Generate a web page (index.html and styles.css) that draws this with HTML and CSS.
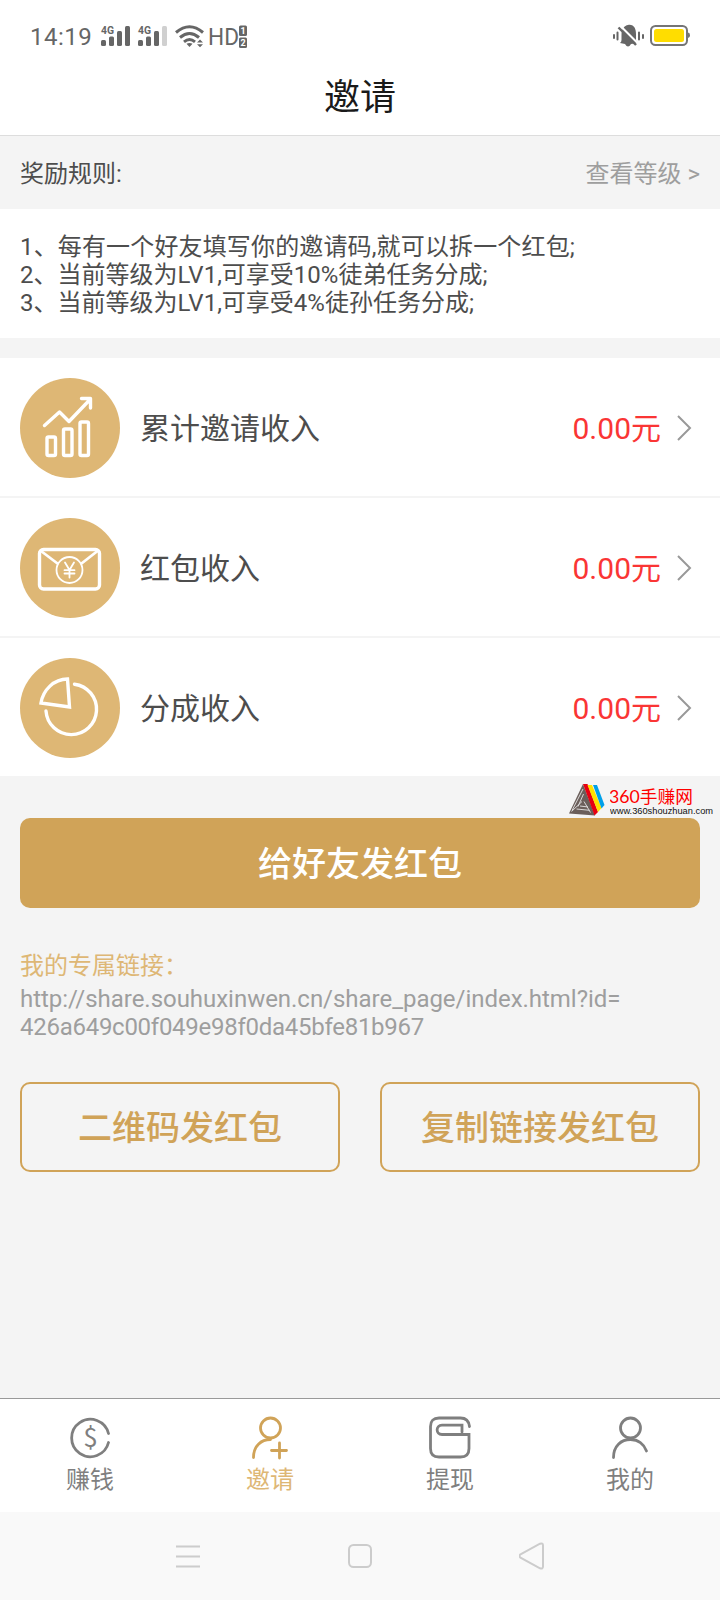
FILE: index.html
```html
<!DOCTYPE html>
<html lang="zh-CN">
<head>
    <meta charset="UTF-8">
    <meta name="viewport" content="width=device-width, initial-scale=1.0">
    <title>邀请</title>
    <link rel="stylesheet" href="styles.css">
</head>
<body>
    <!-- Status bar -->
    <div class="status-bar">
        <span class="time">14:19</span>
        <svg class="signals" width="160" height="28" viewBox="96 22 160 28">
            <g fill="#666">
                <text class="net" x="101" y="34" textLength="13" lengthAdjust="spacingAndGlyphs">4G</text>
                <rect x="101" y="40" width="5" height="6" rx="1.500"/>
                <rect x="109" y="36.500" width="5" height="9.500" rx="1.500"/>
                <rect x="117" y="31" width="5" height="15" rx="1.500"/>
                <rect x="125" y="26" width="5" height="20" rx="1.500"/>
                <text class="net" x="138" y="34" textLength="13" lengthAdjust="spacingAndGlyphs">4G</text>
                <rect x="138" y="40" width="5" height="6" rx="1.500"/>
                <rect x="146" y="36.500" width="5" height="9.500" rx="1.500"/>
                <rect x="154" y="31" width="5" height="15" rx="1.500"/>
                <rect x="162" y="26" width="5" height="20" rx="1.500" fill="#d0d0d0"/>
                <path d="M186.500 43.800q3-1.800 6 0l-3 3.200z"/>
                <path d="M197 42.500l3-3 3 3zM197 44.300h6l-3 3z"/>
                <text class="hd" x="208" y="45" textLength="31" lengthAdjust="spacingAndGlyphs">HD</text>
                <rect x="239" y="25.500" width="8" height="10.500" rx="1.500"/>
                <rect x="239" y="37.500" width="8" height="10.500" rx="1.500"/>
            </g>
            <g fill="none" stroke="#666" stroke-width="3">
                <path d="M176 32.500q13.500-11.500 27 0"/>
                <path d="M180 37.500q9.500-8 19 0"/>
                <path d="M184 41.800q5.500-4.500 11 0"/>
            </g>
            <text class="sim" x="243" y="34">1</text>
            <text class="sim" x="243" y="46">2</text>
        </svg>
        <svg class="battery" width="80" height="28" viewBox="612 22 80 28">
            <path d="M614 35v3M617.500 32.500v7M639 32.500v7M643 35v3" stroke="#666" stroke-width="2" stroke-linecap="round"/>
            <path d="M620 43q1.500-1 1.500-3v-5c0-6 3-9.500 6.500-10 6-1 8 4 8 9v6q0 2 1.500 3l-6.500 1q-3 5-6 0z" fill="#666"/>
            <path d="M620 25.500l19 19" stroke="#fff" stroke-width="2.200"/>
            <path d="M618.500 27.500l17.500 17.500" stroke="#666" stroke-width="2.400"/>
            <rect x="651" y="26" width="36" height="19" rx="4.500" fill="#fff" stroke="#757575" stroke-width="2"/>
            <path d="M688 32.500q2 0 2 2.700t-2 2.700z" fill="#757575"/>
            <rect x="654" y="29" width="30" height="13" rx="2.500" fill="#fd0"/>
        </svg>
    </div>

    <div class="header">邀请</div>

    <!-- Reward rules -->
    <div class="rules-title">
        <span>奖励规则:</span>
        <a href="#">查看等级 &gt;</a>
    </div>
    <div class="rules">
        <p class="wide">1、每有一个好友填写你的邀请码,就可以拆一个红包;</p>
        <p>2、当前等级为LV1,可享受10%徒弟任务分成;</p>
        <p>3、当前等级为LV1,可享受4%徒孙任务分成;</p>
    </div>

    <!-- Income list -->
    <div class="income">
        <div class="income-row">
            <svg class="income-icon" width="100" height="100" viewBox="0 0 100 100">
                <circle cx="50" cy="50" r="50"/>
                <g class="line">
                    <path d="M24.500 47.500L39.500 34 49 43.500 70 21.500M61.500 20.500h9V30"/>
                    <rect x="27" y="59" width="8.500" height="18.500" rx="1.500"/>
                    <rect x="43.500" y="51" width="8.500" height="26.500" rx="1.500"/>
                    <rect x="60" y="44" width="8.500" height="33.500" rx="1.500"/>
                </g>
            </svg>
            <span class="income-name">累计邀请收入</span>
            <span class="income-money">0.00元</span>
            <svg class="arrow" width="16" height="28" viewBox="0 0 16 28"><path d="M2 2l12 12L2 26"/></svg>
        </div>
        <div class="income-row">
            <svg class="income-icon" width="100" height="100" viewBox="0 0 100 100">
                <circle cx="50" cy="50" r="50"/>
                <g class="line">
                    <rect x="19.500" y="31.500" width="60" height="39.500" rx="4"/>
                    <path class="mid" d="M21 33l16.500 12.500M77.500 33L61.500 45.500"/>
                    <circle class="thin" cx="49.500" cy="52" r="13"/>
                    <path class="thin" d="M45 44.500l4.500 7.500 4.500-7.500M49.500 52v7.500M44.500 52.200h10M44.500 55.500h10"/>
                </g>
            </svg>
            <span class="income-name">红包收入</span>
            <span class="income-money">0.00元</span>
            <svg class="arrow" width="16" height="28" viewBox="0 0 16 28"><path d="M2 2l12 12L2 26"/></svg>
        </div>
        <div class="income-row">
            <svg class="income-icon" width="100" height="100" viewBox="0 0 100 100">
                <circle cx="50" cy="50" r="50"/>
                <g class="line">
                    <path class="sharp" d="M47.500 21C34 21 23 32 21 45l28.500 4z"/>
                    <path d="M54.500 26.200A25.300 25.300 0 1 1 26 53"/>
                </g>
            </svg>
            <span class="income-name">分成收入</span>
            <span class="income-money">0.00元</span>
            <svg class="arrow" width="16" height="28" viewBox="0 0 16 28"><path d="M2 2l12 12L2 26"/></svg>
        </div>
    </div>

    <!-- Site mark -->
    <div class="site-mark">
        <svg width="36" height="32" viewBox="0 0 36 32">
            <path d="M14 0L0 29.500 26 31.500z" fill="#6b5f5b"/>
            <path d="M14 5L3 26.500M14.500 10L9 22.500M2.500 27.500L13 17.500M15 17.500l6.500 11M7.500 25l13 1.300M11 22l8 1" stroke="#e4e4e4" stroke-width=".9" fill="none"/>
            <path d="M14 0h4.500l10.500 28-3.500 3.500z" fill="#e60012"/>
            <path d="M18.500 1h4.500l9.500 23-3.500 4z" fill="#ffe100"/>
            <path d="M24 1h4l7.500 20-3 3.500z" fill="#00a0e9"/>
        </svg>
        <div class="site-text">
            <svg width="104" height="32" viewBox="0 0 104 32">
                <text class="site-name" x="-1" y="19" textLength="84" lengthAdjust="spacingAndGlyphs">360手赚网</text>
                <text class="site-url" x="0" y="29.500" textLength="103" lengthAdjust="spacingAndGlyphs">www.360shouzhuan.com</text>
            </svg>
        </div>
    </div>

    <!-- Share actions -->
    <div class="share">
        <button class="btn btn-main">给好友发红包</button>
        <div class="link-title">我的专属链接：</div>
        <div class="link-url">http://share.souhuxinwen.cn/share_page/index.html?id=<br><span class="link-id">426a649c00f049e98f0da45bfe81b967</span></div>
        <div class="btn-group">
            <button class="btn btn-line">二维码发红包</button>
            <button class="btn btn-line">复制链接发红包</button>
        </div>
    </div>

    <!-- Tab bar -->
    <div class="tab-bar">
        <a href="#" class="tab">
            <svg width="44" height="44" viewBox="0 0 44 44">
                <path d="M40.500 17.500A18.700 18.700 0 1 0 40.500 26.500"/>
                <text class="dollar" x="22.500" y="31">$</text>
            </svg>
            <span>赚钱</span>
        </a>
        <a href="#" class="tab active">
            <svg width="44" height="44" viewBox="0 0 44 44">
                <circle cx="22.500" cy="12" r="10"/>
                <path d="M5.500 41.500C5.500 30 13 23.500 22.500 23.500M23.500 34.500h15M31.500 27v15"/>
            </svg>
            <span>邀请</span>
        </a>
        <a href="#" class="tab">
            <svg width="44" height="44" viewBox="0 0 44 44">
                <path d="M41.500 10.500Q40.500 2 32.500 2H11Q2.500 2 2.500 10.500V32.500Q2.500 41 11 41H32.500Q41 41 41 32.500V18.500H14C7.500 18.500 7.500 9.200 14 9.200H34V16"/>
            </svg>
            <span>提现</span>
        </a>
        <a href="#" class="tab">
            <svg width="44" height="44" viewBox="0 0 44 44">
                <circle cx="22.500" cy="12" r="10"/>
                <path d="M5.500 41.500C5.500 30 13 23.500 22.500 23.500C30 23.500 36 28 38.500 35"/>
            </svg>
            <span>我的</span>
        </a>
    </div>

    <!-- System navigation -->
    <div class="nav-bar">
        <svg width="26" height="28" viewBox="0 0 26 28"><path d="M1 4.500h24M1 14.500h24M1 24.500h24"/></svg>
        <svg width="26" height="28" viewBox="0 0 26 28"><rect x="2" y="3" width="22" height="22" rx="4.500"/></svg>
        <svg width="26" height="28" viewBox="0 0 26 28"><path d="M1 12.300L20.500 1.700Q23.500.8 23.500 3.500V24.500Q23.500 27.200 20.500 26.300L1 15.700Q-1 14 1 12.300z" transform="translate(.5 0)"/></svg>
    </div>
</body>
</html>
```
FILE: styles.css
```css
* {
    box-sizing: border-box;
}
body {
    font-family: Roboto, "Noto Sans CJK SC", sans-serif;
    margin: 0;
    min-height: 1600px;
    display: flex;
    flex-direction: column;
    background-color: #f4f4f4;
    color: #4d4d4d;
    font-size: 24px;
}
a {
    color: #9e9e9e;
    text-decoration: none;
}
p {
    margin: 0;
}
svg {
    display: block;
    flex: none;
}
.status-bar {
    height: 72px;
    padding: 0 28px 0 30px;
    display: flex;
    align-items: center;
    background-color: #fff;
    color: #666;
}
.time {
    width: 66px;
    line-height: 28px;
    padding-top: 2px;
    letter-spacing: 0.5px;
}
.battery {
    margin-left: auto;
}
.net {
    font-size: 10px;
    font-weight: bold;
}
.hd {
    font-size: 24px;
}
.sim {
    font-size: 9px;
    font-weight: bold;
    fill: #fff;
    text-anchor: middle;
}
.header {
    height: 64px;
    line-height: 52px;
    border-bottom: 1px solid #ddd;
    background-color: #fff;
    color: #1a1a1a;
    font-size: 36px;
    text-align: center;
}
.rules-title {
    height: 73px;
    padding: 0 20px 2px;
    display: flex;
    justify-content: space-between;
    align-items: center;
}
.rules {
    height: 129px;
    padding: 24px 20px 0;
    background-color: #fff;
    line-height: 28px;
}
.rules .wide {
    letter-spacing: 0.15px;
}
.income {
    margin-top: 20px;
    background-color: #fff;
}
.income-row {
    height: 140px;
    padding: 2px 28px 0 20px;
    display: flex;
    align-items: center;
    border-bottom: 2px solid #f4f4f4;
    font-size: 30px;
}
.income-row:last-child {
    height: 138px;
    border-bottom: none;
}
.income-icon {
    margin-right: 20px;
    fill: #deb775;
}
.income-name,
.income-money {
    padding-bottom: 4px;
}
.line {
    fill: none;
    stroke: #fff;
    stroke-width: 3.4;
    stroke-linecap: round;
    stroke-linejoin: round;
}
.line .mid {
    stroke-width: 2.8;
}
.line .thin {
    stroke-width: 1.8;
}
.line .sharp {
    stroke-linejoin: miter;
}
.income-money {
    margin-left: auto;
    color: #fa3534;
}
.arrow {
    margin-left: 15px;
    fill: none;
    stroke: #999;
    stroke-width: 2;
}
.site-mark {
    height: 42px;
    padding: 8px 6px 0 0;
    display: flex;
    justify-content: flex-end;
}
.site-text {
    margin-left: 5px;
    width: 104px;
}
.site-name {
    fill: #f00;
    font-size: 17px;
    font-family: Lato, "Noto Sans CJK SC", sans-serif;
}
.site-url {
    fill: #111;
    font-size: 9px;
    font-family: "Liberation Sans", sans-serif;
}
.share {
    padding: 0 20px;
}
.btn {
    display: block;
    width: 100%;
    height: 90px;
    padding: 0 0 4px;
    border: none;
    border-radius: 10px;
    font-family: inherit;
    font-size: 34px;
    font-weight: 500;
    cursor: pointer;
}
.btn-main {
    background-color: #d0a358;
    color: #fff;
}
.btn-line {
    border: 2px solid #d0a358;
    background-color: transparent;
    color: #d0a358;
}
.link-title {
    margin-top: 40px;
    line-height: 36px;
    color: #deb775;
}
.link-url {
    margin-top: 1px;
    line-height: 28px;
    letter-spacing: -0.03px;
    color: #9e9e9e;
}
.link-id {
    letter-spacing: -0.27px;
}
.btn-group {
    margin-top: 41px;
    display: flex;
    gap: 40px;
}
.tab-bar {
    height: 114px;
    margin-top: auto;
    display: flex;
    border-top: 1px solid #999;
    background-color: #fff;
}
.tab {
    flex: 1;
    padding-top: 17px;
    display: flex;
    flex-direction: column;
    align-items: center;
    color: #7f7f7f;
    line-height: 36px;
}
.tab svg {
    margin-bottom: 2px;
    fill: none;
    stroke: #7f7f7f;
    stroke-width: 2.8;
    stroke-linecap: round;
}
.tab .dollar {
    font-size: 26px;
    font-family: "Noto Sans CJK SC", sans-serif;
    text-anchor: middle;
    fill: #7f7f7f;
    stroke: none;
}
.tab.active {
    color: #deb775;
}
.tab.active svg {
    stroke: #d0a358;
}
.nav-bar {
    height: 88px;
    padding: 0 175px;
    display: flex;
    justify-content: space-between;
    align-items: center;
    background-color: #f9f9f9;
}
.nav-bar svg {
    fill: none;
    stroke: #ccc;
    stroke-width: 2;
}
```
